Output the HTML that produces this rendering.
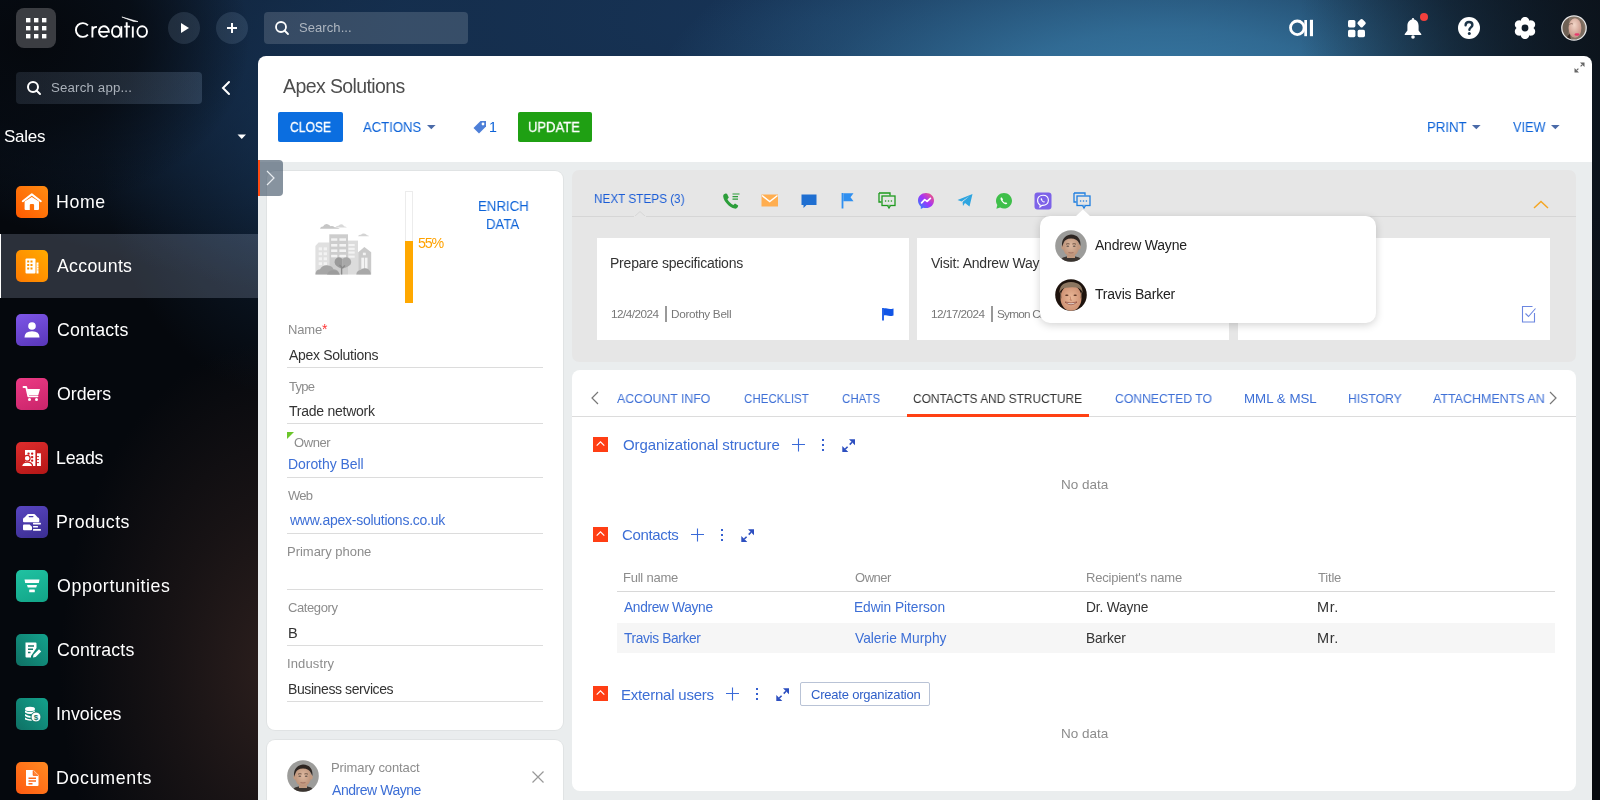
<!DOCTYPE html>
<html><head><meta charset="utf-8">
<style>
*{box-sizing:border-box;margin:0;padding:0}
html,body{width:1600px;height:800px;overflow:hidden}
body{font-family:"Liberation Sans",sans-serif;position:relative;background:#05080d}
.abs{position:absolute}
#bg{position:absolute;left:0;top:0;width:1600px;height:800px;
 background:
  radial-gradient(ellipse 520px 380px at 1330px 60px, rgba(52,110,150,0.95) 0%, rgba(40,90,130,0.6) 45%, rgba(20,50,80,0) 100%),
  radial-gradient(ellipse 700px 300px at 700px 0px, rgba(25,55,90,0.9) 0%, rgba(20,45,75,0) 100%),
  radial-gradient(ellipse 300px 400px at 250px 640px, rgba(60,35,35,0.7) 0%, rgba(40,25,25,0) 100%),
  linear-gradient(90deg,#04070c 0%, #0a1422 30%, #102640 60%, #0b1626 100%);}
.top{color:#fff}
.tb-grid{left:16px;top:8px;width:40px;height:40px;border-radius:8px;background:#3b3d42}
.tb-circ{width:32px;height:32px;border-radius:50%;background:rgba(170,195,230,0.14);top:12px}
.tb-search{left:264px;top:12px;width:204px;height:32px;border-radius:4px;background:rgba(255,255,255,0.15)}
.txt{white-space:nowrap;position:absolute;will-change:transform}
</style></head><body>
<div class="abs" style="left:0;top:0;width:1600px;height:800px;background:
 linear-gradient(90deg, rgba(12,19,27,0) 1300px, rgba(12,19,27,0.55) 1450px, rgba(12,19,27,0.95) 1600px),
 radial-gradient(ellipse 220px 170px at 30px 40px, rgba(5,8,13,1) 0%, rgba(5,8,13,0.75) 50%, rgba(5,8,13,0) 100%),
 radial-gradient(ellipse 520px 230px at 1170px 110px, rgba(58,126,170,1) 0%, rgba(58,126,170,0.75) 35%, rgba(58,126,170,0.3) 70%, rgba(58,126,170,0) 100%),
 radial-gradient(ellipse 1050px 320px at 820px 20px, rgba(23,52,87,1) 0%, rgba(23,52,87,0.85) 40%, rgba(23,52,87,0.4) 75%, rgba(23,52,87,0) 100%),
 radial-gradient(ellipse 200px 260px at 300px 140px, rgba(19,42,69,0.85) 0%, rgba(19,42,69,0.4) 50%, rgba(19,42,69,0) 100%),
 radial-gradient(ellipse 220px 330px at 280px 670px, rgba(58,39,35,0.75) 0%, rgba(58,39,35,0.35) 50%, rgba(58,39,35,0) 100%),
 #05080d"></div>
<div class="abs" style="left:1592px;top:300px;width:8px;height:500px;background:#080b10"></div>



<!-- top bar -->
<div class="abs tb-grid">
 <svg width="40" height="40" viewBox="0 0 40 40" fill="#fff">
  <rect x="10" y="10" width="4.4" height="4.4"/><rect x="18" y="10" width="4.4" height="4.4"/><rect x="26" y="10" width="4.4" height="4.4"/>
  <rect x="10" y="18" width="4.4" height="4.4"/><rect x="18" y="18" width="4.4" height="4.4"/><rect x="26" y="18" width="4.4" height="4.4"/>
  <rect x="10" y="26" width="4.4" height="4.4"/><rect x="18" y="26" width="4.4" height="4.4"/><rect x="26" y="26" width="4.4" height="4.4"/>
 </svg>
</div>
<svg class="abs" style="left:70px;top:10px" width="90" height="36" viewBox="0 0 90 36" fill="none" stroke="#fff" stroke-width="1.9">
 <path d="M17.93 15.38 A6.9 6.9 0 1 0 17.93 24.62"/>
 <path d="M22.4 16.3 V27.6 M22.4 21 Q22.6 16.9 27 16.9"/>
 <path d="M28.95 21.90 H38.85 A4.95 5.3 0 1 0 37.58 25.15"/>
 <ellipse cx="46.2" cy="21.6" rx="4.2" ry="5.3"/><path d="M51.3 16.2 V27.6"/>
 <path d="M56.7 12.2 V27.6 M54.2 16.6 H60"/>
 <path d="M62.8 16.4 V27.6"/>
 <ellipse cx="72.2" cy="21.6" rx="4.8" ry="5.3"/>
 <path d="M51.9 7 L68 11.6 L63.6 11.4Z" fill="#fff" stroke-width="0.6" stroke-linejoin="round"/>
</svg>
<div class="abs tb-circ" style="left:168px"></div>
<svg class="abs" style="left:176px;top:20px" width="16" height="16" viewBox="0 0 16 16"><path d="M5 3 L13 8 L5 13Z" fill="#fff"/></svg>
<div class="abs tb-circ" style="left:216px"></div>
<svg class="abs" style="left:224px;top:20px" width="16" height="16" viewBox="0 0 16 16"><path d="M8 3 V13 M3 8 H13" stroke="#fff" stroke-width="2"/></svg>
<div class="abs tb-search"></div>
<svg class="abs" style="left:274px;top:20px" width="16" height="16" viewBox="0 0 16 16"><circle cx="7" cy="7" r="5" fill="none" stroke="#fff" stroke-width="1.8"/><path d="M10.5 10.5 L14 14" stroke="#fff" stroke-width="1.8" stroke-linecap="round"/></svg>
<!-- right icons -->
<svg class="abs" style="left:1286px;top:16px" width="30" height="24" viewBox="0 0 30 24"><circle cx="11.3" cy="11.8" r="6.8" fill="none" stroke="#fff" stroke-width="2.8"/><path d="M19.65 4 V20.2" stroke="#fff" stroke-width="2.7"/><path d="M25.45 3.8 V20.2" stroke="#fff" stroke-width="3.1"/></svg>
<svg class="abs" style="left:1346px;top:18px" width="22" height="22" viewBox="0 0 22 22" fill="#fff">
 <rect x="2" y="2" width="7.4" height="7.4" rx="1.6"/><rect x="2" y="11.8" width="7.4" height="7.4" rx="1.6"/><rect x="11.6" y="11.8" width="7.4" height="7.4" rx="1.6"/>
 <rect x="12.2" y="1.8" width="6.8" height="6.8" rx="1.6" transform="rotate(45 15.6 5.2)"/>
</svg>
<svg class="abs" style="left:1402px;top:16px" width="24" height="24" viewBox="0 0 24 24" fill="#fff">
 <path d="M11 3.2 C7 3.6 5.4 6.5 5.4 10 V14.6 L2.6 18.2 Q2.4 19 3.2 19 H18.8 Q19.6 19 19.4 18.2 L16.6 14.6 V10 C16.6 6.5 15 3.6 11 3.2Z"/><circle cx="11" cy="3" r="1.1"/>
 <circle cx="11" cy="21" r="1.8"/>
</svg>
<div class="abs" style="left:1420px;top:13px;width:8px;height:8px;border-radius:50%;background:#f2403d"></div>
<svg class="abs" style="left:1457px;top:16px" width="24" height="24" viewBox="0 0 24 24">
 <circle cx="12" cy="12" r="11" fill="#fff"/>
 <path d="M8.6 9.3 C8.6 7.2 10.2 6 12 6 C14 6 15.4 7.3 15.4 9 C15.4 11.2 12.4 11.5 12.4 13.8" fill="none" stroke="#1c3448" stroke-width="2.4" stroke-linecap="round"/>
 <circle cx="12.3" cy="17.4" r="1.5" fill="#1c3448"/>
</svg>
<svg class="abs" style="left:1512px;top:16px" width="26" height="24" viewBox="0 0 26 24"><path fill="#fff" fill-rule="evenodd" d="M21.40 12.00 L21.65 12.15 L21.84 12.31 L22.00 12.47 L22.15 12.64 L22.28 12.81 L22.40 12.99 L22.52 13.17 L22.62 13.35 L22.71 13.54 L22.80 13.73 L22.88 13.92 L22.94 14.11 L23.00 14.31 L23.05 14.51 L23.09 14.70 L23.12 14.90 L23.14 15.10 L23.16 15.30 L23.16 15.50 L23.15 15.70 L23.14 15.89 L23.12 16.09 L23.08 16.28 L23.04 16.47 L22.99 16.66 L22.93 16.85 L22.87 17.03 L22.79 17.21 L22.71 17.38 L22.61 17.55 L22.51 17.72 L22.40 17.88 L22.29 18.03 L22.16 18.18 L22.03 18.32 L21.89 18.46 L21.75 18.59 L21.60 18.72 L21.44 18.84 L21.28 18.95 L21.11 19.05 L20.94 19.15 L20.76 19.23 L20.57 19.31 L20.39 19.39 L20.20 19.45 L20.00 19.51 L19.80 19.55 L19.60 19.59 L19.40 19.62 L19.19 19.64 L18.98 19.66 L18.77 19.66 L18.56 19.65 L18.34 19.63 L18.13 19.60 L17.91 19.56 L17.69 19.50 L17.46 19.42 L17.20 19.27 L17.20 19.57 L17.15 19.81 L17.09 20.03 L17.02 20.24 L16.94 20.44 L16.85 20.64 L16.75 20.83 L16.64 21.01 L16.52 21.18 L16.40 21.35 L16.28 21.51 L16.14 21.67 L16.00 21.82 L15.86 21.96 L15.70 22.09 L15.55 22.22 L15.39 22.33 L15.22 22.45 L15.05 22.55 L14.88 22.64 L14.70 22.73 L14.52 22.81 L14.34 22.87 L14.15 22.93 L13.96 22.98 L13.77 23.03 L13.58 23.06 L13.39 23.08 L13.19 23.10 L13.00 23.10 L12.81 23.10 L12.61 23.08 L12.42 23.06 L12.23 23.03 L12.04 22.98 L11.85 22.93 L11.66 22.87 L11.48 22.81 L11.30 22.73 L11.12 22.64 L10.95 22.55 L10.78 22.45 L10.61 22.33 L10.45 22.22 L10.30 22.09 L10.14 21.96 L10.00 21.82 L9.86 21.67 L9.72 21.51 L9.60 21.35 L9.48 21.18 L9.36 21.01 L9.25 20.83 L9.15 20.64 L9.06 20.44 L8.98 20.24 L8.91 20.03 L8.85 19.81 L8.80 19.57 L8.80 19.27 L8.54 19.42 L8.31 19.50 L8.09 19.56 L7.87 19.60 L7.66 19.63 L7.44 19.65 L7.23 19.66 L7.02 19.66 L6.81 19.64 L6.60 19.62 L6.40 19.59 L6.20 19.55 L6.00 19.51 L5.80 19.45 L5.61 19.39 L5.43 19.31 L5.24 19.23 L5.06 19.15 L4.89 19.05 L4.72 18.95 L4.56 18.84 L4.40 18.72 L4.25 18.59 L4.11 18.46 L3.97 18.32 L3.84 18.18 L3.71 18.03 L3.60 17.88 L3.49 17.72 L3.39 17.55 L3.29 17.38 L3.21 17.21 L3.13 17.03 L3.07 16.85 L3.01 16.66 L2.96 16.47 L2.92 16.28 L2.88 16.09 L2.86 15.89 L2.85 15.70 L2.84 15.50 L2.84 15.30 L2.86 15.10 L2.88 14.90 L2.91 14.70 L2.95 14.51 L3.00 14.31 L3.06 14.11 L3.12 13.92 L3.20 13.73 L3.29 13.54 L3.38 13.35 L3.48 13.17 L3.60 12.99 L3.72 12.81 L3.85 12.64 L4.00 12.47 L4.16 12.31 L4.35 12.15 L4.60 12.00 L4.35 11.85 L4.16 11.69 L4.00 11.53 L3.85 11.36 L3.72 11.19 L3.60 11.01 L3.48 10.83 L3.38 10.65 L3.29 10.46 L3.20 10.27 L3.12 10.08 L3.06 9.89 L3.00 9.69 L2.95 9.49 L2.91 9.30 L2.88 9.10 L2.86 8.90 L2.84 8.70 L2.84 8.50 L2.85 8.30 L2.86 8.11 L2.88 7.91 L2.92 7.72 L2.96 7.53 L3.01 7.34 L3.07 7.15 L3.13 6.97 L3.21 6.79 L3.29 6.62 L3.39 6.45 L3.49 6.28 L3.60 6.12 L3.71 5.97 L3.84 5.82 L3.97 5.68 L4.11 5.54 L4.25 5.41 L4.40 5.28 L4.56 5.16 L4.72 5.05 L4.89 4.95 L5.06 4.85 L5.24 4.77 L5.43 4.69 L5.61 4.61 L5.80 4.55 L6.00 4.49 L6.20 4.45 L6.40 4.41 L6.60 4.38 L6.81 4.36 L7.02 4.34 L7.23 4.34 L7.44 4.35 L7.66 4.37 L7.87 4.40 L8.09 4.44 L8.31 4.50 L8.54 4.58 L8.80 4.73 L8.80 4.43 L8.85 4.19 L8.91 3.97 L8.98 3.76 L9.06 3.56 L9.15 3.36 L9.25 3.17 L9.36 2.99 L9.48 2.82 L9.60 2.65 L9.72 2.49 L9.86 2.33 L10.00 2.18 L10.14 2.04 L10.30 1.91 L10.45 1.78 L10.61 1.67 L10.78 1.55 L10.95 1.45 L11.12 1.36 L11.30 1.27 L11.48 1.19 L11.66 1.13 L11.85 1.07 L12.04 1.02 L12.23 0.97 L12.42 0.94 L12.61 0.92 L12.81 0.90 L13.00 0.90 L13.19 0.90 L13.39 0.92 L13.58 0.94 L13.77 0.97 L13.96 1.02 L14.15 1.07 L14.34 1.13 L14.52 1.19 L14.70 1.27 L14.88 1.36 L15.05 1.45 L15.22 1.55 L15.39 1.67 L15.55 1.78 L15.70 1.91 L15.86 2.04 L16.00 2.18 L16.14 2.33 L16.28 2.49 L16.40 2.65 L16.52 2.82 L16.64 2.99 L16.75 3.17 L16.85 3.36 L16.94 3.56 L17.02 3.76 L17.09 3.97 L17.15 4.19 L17.20 4.43 L17.20 4.73 L17.46 4.58 L17.69 4.50 L17.91 4.44 L18.13 4.40 L18.34 4.37 L18.56 4.35 L18.77 4.34 L18.98 4.34 L19.19 4.36 L19.40 4.38 L19.60 4.41 L19.80 4.45 L20.00 4.49 L20.20 4.55 L20.39 4.61 L20.57 4.69 L20.76 4.77 L20.94 4.85 L21.11 4.95 L21.28 5.05 L21.44 5.16 L21.60 5.28 L21.75 5.41 L21.89 5.54 L22.03 5.68 L22.16 5.82 L22.29 5.97 L22.40 6.12 L22.51 6.28 L22.61 6.45 L22.71 6.62 L22.79 6.79 L22.87 6.97 L22.93 7.15 L22.99 7.34 L23.04 7.53 L23.08 7.72 L23.12 7.91 L23.14 8.11 L23.15 8.30 L23.16 8.50 L23.16 8.70 L23.14 8.90 L23.12 9.10 L23.09 9.30 L23.05 9.49 L23.00 9.69 L22.94 9.89 L22.88 10.08 L22.80 10.27 L22.71 10.46 L22.62 10.65 L22.52 10.83 L22.40 11.01 L22.28 11.19 L22.15 11.36 L22.00 11.53 L21.84 11.69 L21.65 11.85Z M16.4 12 A3.4 3.4 0 1 0 9.6 12 A3.4 3.4 0 1 0 16.4 12Z"/></svg>
<svg class="abs" style="left:1561px;top:15px" width="26" height="26" viewBox="0 0 26 26"><defs><clipPath id="uav"><circle cx="13" cy="13" r="12"/></clipPath><radialGradient id="uavf" cx="0.45" cy="0.35" r="0.6"><stop offset="0" stop-color="#f2d6c8"/><stop offset="1" stop-color="#c9988a"/></radialGradient></defs>
<g clip-path="url(#uav)"><rect width="26" height="26" fill="#857466"/>
<path d="M0 26 L0 8 Q3 2 8 3 L7 26Z" fill="#6e6054"/>
<path d="M19 4 Q24 8 24 26 L20 26Z" fill="#7a6a5e"/>
<path d="M5 26 Q6 20 9 19 L10 26Z" fill="#3a2a22"/>
<ellipse cx="14" cy="13" rx="6.4" ry="9.8" fill="url(#uavf)"/>
<path d="M8 10 Q10 7.5 12 9" fill="none" stroke="#8a6a5a" stroke-width="0.8"/>
<ellipse cx="16" cy="19.5" rx="2.6" ry="1.2" fill="#e8386e"/>
</g><circle cx="13" cy="13" r="12.2" fill="none" stroke="#e8e8e8" stroke-width="1.3"/></svg>
<!-- sidebar -->
<div class="abs" style="left:16px;top:72px;width:186px;height:32px;border-radius:4px;background:linear-gradient(90deg,rgba(160,185,220,0.13),rgba(170,200,235,0.18))"></div>
<svg class="abs" style="left:26px;top:80px" width="16" height="16" viewBox="0 0 16 16"><circle cx="7" cy="7" r="5" fill="none" stroke="#fff" stroke-width="2"/><path d="M10.5 10.5 L14 14" stroke="#fff" stroke-width="2" stroke-linecap="round"/></svg>
<svg class="abs" style="left:218px;top:80px" width="16" height="16" viewBox="0 0 16 16"><path d="M11 2 L5 8 L11 14" fill="none" stroke="#fff" stroke-width="2" stroke-linecap="round"/></svg>
<svg class="abs" style="left:237px;top:134px" width="10" height="6" viewBox="0 0 10 6"><path d="M0.5 0.5 H9 L4.75 5Z" fill="#fff"/></svg>
<div class="abs" style="left:0;top:234px;width:258px;height:64px;background:rgba(195,212,240,0.2);border-left:1px solid #fff"></div>
<div class="abs" style="left:16px;top:186px;width:32px;height:32px;border-radius:5px;background:linear-gradient(225deg,#ff8c12,#ff5a00)"></div>
<svg class="abs" style="left:16px;top:186px" width="32" height="32" viewBox="0 0 32 32"><path d="M6.8 15.2 L15.8 8.4 L24.8 15.2" fill="none" stroke="#fff" stroke-width="2" stroke-linejoin="round" stroke-linecap="round"/><path d="M8.6 15.6 L15.8 10.9 L23 15.6 V23 Q23 24 22 24 H18.1 V19 Q18.1 17.9 17 17.9 H14.9 Q13.8 17.9 13.8 19 V24 H9.6 Q8.6 24 8.6 23Z" fill="#fff"/></svg>
<div class="abs" style="left:16px;top:250px;width:32px;height:32px;border-radius:5px;background:linear-gradient(225deg,#ffab00,#ff7a00)"></div>
<svg class="abs" style="left:16px;top:250px" width="32" height="32" viewBox="0 0 32 32"><rect x="9.5" y="8.5" width="10" height="15" rx="1" fill="#fff"/><g fill="#ff9500"><rect x="11.2" y="10.5" width="2" height="2"/><rect x="14.5" y="10.5" width="2" height="2"/><rect x="11.2" y="14" width="2" height="2"/><rect x="14.5" y="14" width="2" height="2"/><rect x="11.2" y="17.5" width="2" height="2"/><rect x="14.5" y="17.5" width="2" height="2"/></g><path d="M20.5 12.5 H22.5 V23.5 H20.5" fill="#fff"/><g stroke="#ff9500" stroke-width="0.7"><path d="M21.5 15 H22.6 M21.5 17.5 H22.6 M21.5 20 H22.6"/></g></svg>
<div class="abs" style="left:16px;top:314px;width:32px;height:32px;border-radius:5px;background:linear-gradient(160deg,#7e56e8,#5836b8)"></div>
<svg class="abs" style="left:16px;top:314px" width="32" height="32" viewBox="0 0 32 32"><circle cx="16" cy="12" r="3.8" fill="#fff"/><path d="M8.5 23.5 Q8.5 17.3 16 17.3 Q23.5 17.3 23.5 23.5Z" fill="#fff"/></svg>
<div class="abs" style="left:16px;top:378px;width:32px;height:32px;border-radius:5px;background:linear-gradient(160deg,#ec3a84,#c9246a)"></div>
<svg class="abs" style="left:16px;top:378px" width="32" height="32" viewBox="0 0 32 32"><path d="M7.5 9 H10.2 L12.3 18.3 H21.5" fill="none" stroke="#fff" stroke-width="1.8" stroke-linejoin="round" stroke-linecap="round"/><path d="M11 11 H24 L22.3 17 H12.4Z" fill="#fff"/><circle cx="13.5" cy="21.5" r="1.5" fill="#fff"/><circle cx="20.5" cy="21.5" r="1.5" fill="#fff"/></svg>
<div class="abs" style="left:16px;top:442px;width:32px;height:32px;border-radius:5px;background:linear-gradient(160deg,#de2d2d,#b31616)"></div>
<svg class="abs" style="left:16px;top:442px" width="32" height="32" viewBox="0 0 32 32"><rect x="9" y="8" width="10.4" height="16" fill="#fff"/><g fill="#cf1d1d"><rect x="11.4" y="10.4" width="2.3" height="2.3" rx="1"/><rect x="15" y="10.4" width="2.3" height="2.3" rx="1"/><rect x="11.4" y="13.9" width="2.3" height="2.3" rx="1"/><rect x="15" y="13.9" width="2.3" height="2.3" rx="1"/><rect x="15" y="17.4" width="2.3" height="2.3" rx="1"/></g><rect x="21" y="11.3" width="3.9" height="12.7" fill="#fff"/><g stroke="#cf1d1d" stroke-width="0.9"><path d="M21 14.6 H23 M21 17.6 H23 M21 20.6 H23"/></g><circle cx="11.2" cy="16.2" r="2.9" fill="#fff" stroke="#cf1d1d" stroke-width="1.2"/><path d="M5.6 24.6 Q5.6 20.2 11.1 20.2 Q16.6 20.2 16.6 24.6Z" fill="#fff" stroke="#cf1d1d" stroke-width="1.2"/></svg>
<div class="abs" style="left:16px;top:506px;width:32px;height:32px;border-radius:5px;background:linear-gradient(160deg,#5845c0,#3b2e91)"></div>
<svg class="abs" style="left:16px;top:506px" width="32" height="32" viewBox="0 0 32 32"><path d="M8 16.2 Q7 16.2 7 15.2 V13.2 Q7 11.6 8.8 11.2 L10.8 8.9 Q11.4 8 12.5 8 H17.8 Q18.9 8 19.5 8.9 L21.5 11.2 Q23.3 11.6 23.3 13.2 V15.2 Q23.3 16.2 22.3 16.2Z" fill="#fff"/><rect x="12.6" y="9.9" width="4.9" height="1.3" rx="0.6" fill="#4a3cad"/><path d="M7 19.2 Q7 18.4 8 18.4 H13.6 L16 20.8 V23.2 Q16 24.2 15 24.2 H8 Q7 24.2 7 23.2Z" fill="#fff"/><rect x="17" y="16.7" width="7.9" height="1.8" rx="0.5" fill="#fff"/><rect x="17" y="19.9" width="5" height="1.7" rx="0.5" fill="#fff"/><rect x="17" y="23" width="7.9" height="1.7" rx="0.5" fill="#fff"/></svg>
<div class="abs" style="left:16px;top:570px;width:32px;height:32px;border-radius:5px;background:linear-gradient(160deg,#20c2a2,#12a487)"></div>
<svg class="abs" style="left:16px;top:570px" width="32" height="32" viewBox="0 0 32 32"><path d="M8.5 9.5 H23.5 L22.8 13 H9.2Z" fill="#fff"/><path d="M11 15 H21 L20.2 17.6 H11.8Z" fill="#fff"/><rect x="13.2" y="19.6" width="5.6" height="2.6" rx="0.5" fill="#fff"/></svg>
<div class="abs" style="left:16px;top:634px;width:32px;height:32px;border-radius:5px;background:linear-gradient(225deg,#13a28c,#0f7064)"></div>
<svg class="abs" style="left:16px;top:634px" width="32" height="32" viewBox="0 0 32 32"><path d="M9.5 8.5 H19.5 Q20.5 8.5 20.5 9.5 V14 L15 22 V23.5 H10.5 Q9.5 23.5 9.5 22.5Z" fill="#fff"/><g stroke="#17796c" stroke-width="1.5"><path d="M12 12 H18 M12 15.2 H17 M12 18.4 H14.5"/></g><path d="M17 23.5 L17.5 20.8 L23 15.3 L25.2 17.5 L19.7 23Z" fill="#fff"/></svg>
<div class="abs" style="left:16px;top:698px;width:32px;height:32px;border-radius:5px;background:linear-gradient(225deg,#13a28c,#0f7064)"></div>
<svg class="abs" style="left:16px;top:698px" width="32" height="32" viewBox="0 0 32 32"><ellipse cx="14" cy="11" rx="5" ry="2.2" fill="#fff"/><path d="M9 12.5 Q14 15.5 19 12.5 V14.5 Q14 17.5 9 14.5Z" fill="#fff"/><path d="M9 16 Q14 19 16 17.5 V19.5 Q12 20.5 9 18Z" fill="#fff"/><path d="M9 19.5 Q12 21.8 16 21 V22.5 Q12 23 9 21.5Z" fill="#fff"/><circle cx="20" cy="19" r="5" fill="#fff" stroke="#17796c" stroke-width="1"/><text x="20" y="22" font-family="Liberation Sans" font-size="8" font-weight="bold" text-anchor="middle" fill="#17796c">$</text></svg>
<div class="abs" style="left:16px;top:762px;width:32px;height:32px;border-radius:5px;background:linear-gradient(225deg,#ff8a22,#ff5a10)"></div>
<svg class="abs" style="left:16px;top:762px" width="32" height="32" viewBox="0 0 32 32"><path d="M10 8 H17.5 L22.5 13 V23 Q22.5 24 21.5 24 H11 Q10 24 10 23Z" fill="#fff"/><path d="M17 8 V13.5 H22.5" fill="#ff8a3d"/><path d="M17.2 8.5 V13.3 H22" fill="none" stroke="#ff6a1a" stroke-width="1"/><g stroke="#ff6a1a" stroke-width="1.4"><path d="M12.5 16.3 H20 M12.5 19 H20 M12.5 21.7 H16.5"/></g></svg>

<!-- main panel -->
<div class="abs" style="left:258px;top:56px;width:1334px;height:744px;background:#fff;border-top-left-radius:8px;border-top-right-radius:8px"></div>
<div class="abs" style="left:258px;top:162px;width:1334px;height:638px;background:#eaedee"></div>
<svg class="abs" style="left:1574px;top:62px" width="11" height="11" viewBox="0 0 11 11"><path d="M6 0.5 H10.5 V5Z M0.5 6 V10.5 H5Z" fill="#666"/><path d="M6.6 4.4 L8.2 2.8 M4.4 6.6 L2.8 8.2" stroke="#666" stroke-width="1.2"/></svg>
<div class="abs" style="left:278px;top:112px;width:65px;height:30px;border-radius:2px;background:#0b6ee0"></div>
<svg class="abs" style="left:427px;top:125px" width="9" height="5" viewBox="0 0 9 5"><path d="M0 0 H8.6 L4.3 4.3Z" fill="#4a6aa8"/></svg>
<svg class="abs" style="left:472px;top:119px" width="16" height="16" viewBox="0 0 16 16"><path d="M1.5 9 L8.5 2 H14 V7.5 L7 14.5Z" fill="#4d7fd8"/><circle cx="11" cy="5" r="1.4" fill="#fff"/></svg>
<div class="abs" style="left:518px;top:112px;width:74px;height:30px;border-radius:2px;background:#1fa013"></div>
<svg class="abs" style="left:1472px;top:125px" width="9" height="5" viewBox="0 0 9 5"><path d="M0 0 H8.6 L4.3 4.3Z" fill="#4a6aa8"/></svg>
<svg class="abs" style="left:1551px;top:125px" width="9" height="5" viewBox="0 0 9 5"><path d="M0 0 H8.6 L4.3 4.3Z" fill="#4a6aa8"/></svg>

<!-- left card -->
<div class="abs" style="left:267px;top:171px;width:296px;height:559px;background:#fff;border-radius:8px;box-shadow:0 0 0 1px rgba(0,0,0,0.04)"></div>
<!-- side toggle -->
<div class="abs" style="left:258px;top:160px;width:25px;height:36px;background:rgba(62,80,100,0.62);border-radius:0 4px 4px 0"></div>
<div class="abs" style="left:258px;top:160px;width:2px;height:36px;background:#ff4b12"></div>
<svg class="abs" style="left:264px;top:170px" width="12" height="16" viewBox="0 0 12 16"><path d="M3 1 L10 8 L3 15" fill="none" stroke="#e8ecf0" stroke-width="1.2"/></svg>

<svg class="abs" style="left:314px;top:222px" width="58" height="54" viewBox="0 0 58 54">
 <path d="M1.4 24 L4.5 20.4 H15.5 V52.6 H1.4Z" fill="#e0e0e0"/>
 <rect x="34" y="18.6" width="10" height="34" fill="#dcdcdc"/>
 <rect x="15.3" y="12.3" width="18.7" height="40.3" fill="#cdcdcd"/>
 <path d="M44.2 30.3 L50.4 25 L57.2 30.3 V52.6 H44.2Z" fill="#cacaca"/>
 <g fill="#f3f3f3">
  <rect x="17.1" y="16.3" width="6.2" height="2.5"/><rect x="25.4" y="16.3" width="6.6" height="2.5"/>
  <rect x="17.1" y="22" width="6.2" height="2.6"/><rect x="25.4" y="22" width="6.6" height="2.6"/>
  <rect x="17.1" y="27.4" width="6.2" height="2.6"/><rect x="25.4" y="27.4" width="6.6" height="2.6"/>
  <rect x="17.1" y="32.8" width="6.2" height="2.5"/><rect x="25.4" y="32.8" width="6.6" height="2.5"/>
  <rect x="34.5" y="22" width="6.2" height="2.1"/><rect x="34.5" y="25.8" width="6.2" height="2.1"/><rect x="34.5" y="29.5" width="6.2" height="2.1"/><rect x="34.5" y="33.6" width="6.2" height="2.1"/>
  <rect x="4.7" y="25.4" width="3.3" height="2.9"/><rect x="9.7" y="25.4" width="3.3" height="2.9"/>
  <rect x="4.7" y="30.3" width="3.3" height="2.9"/><rect x="9.7" y="30.3" width="3.3" height="2.9"/>
  <rect x="4.7" y="35.3" width="3.3" height="2.9"/><rect x="9.7" y="35.3" width="3.3" height="2.9"/>
  <rect x="4.7" y="40.2" width="3.3" height="2.9"/><rect x="9.7" y="40.2" width="3.3" height="2.9"/>
  <rect x="48.9" y="30.7" width="2.9" height="2.5"/>
  <rect x="47.3" y="35.7" width="2.9" height="11"/><rect x="51" y="35.7" width="2.5" height="11"/>
 </g>
 <path d="M6 6.8 Q6.5 4.5 9 4.6 Q10.5 1.4 13.5 2.2 Q15.5 2.5 16.5 4.2 Q19 3.5 20.5 5.3 Q23.5 5 25.8 6.8Z" fill="#c6c6c6"/>
 <path d="M21.2 5.6 Q22.5 3.5 24.5 3.8 Q26 1.4 28.5 2.5 Q30 4 30.5 4.6 Q32 4.6 32.8 5.6Z" fill="#d9d9d9"/>
 <path d="M44 14.2 Q45 12.5 47 12.8 Q48.5 10.8 51 11.8 Q52.5 12.5 53 13.2 Q54.5 13.3 55 14.2Z" fill="#d4d4d4"/>
 <path d="M28.5 37 Q26 34.5 23.5 35.5 Q20.4 37 20.6 40.5 Q21 44.5 28 46.8Z" fill="#9a9a9a"/>
 <path d="M28.5 37 Q31 34.5 34 35.5 Q37.4 37 37.2 40.5 Q37 44.5 28 46.8Z" fill="#a8a8a8"/>
 <path d="M27.6 52.6 V45 L25.5 43 M28.4 46 L31 43.5" stroke="#8a8a8a" stroke-width="1.4" fill="none"/>
 <path d="M1.4 52.6 Q1.5 47.5 6 47.2 Q8 43.2 13 43.2 Q18.5 43.6 19.5 47.3 Q22 47 24 49 L25.8 52.6Z" fill="#a6a6a6"/>
 <path d="M13 52.6 Q14.5 48.5 19 48.3 Q23.5 48 25.8 52.6Z" fill="#9c9c9c"/>
 <path d="M42.3 52.6 Q42.5 48.5 46.5 48 Q49 45.8 52.5 46.5 Q56.5 47.5 56.8 52.6Z" fill="#a8a8a8"/>
</svg>
<div class="abs" style="left:405px;top:191px;width:8px;height:112px;border:1px solid #ececec;background:#fff"></div>
<div class="abs" style="left:405px;top:241px;width:8px;height:62px;background:#ffa800"></div>
<div class="abs" style="left:287px;top:367px;width:256px;height:1px;background:#dcdcdc"></div>
<div class="abs" style="left:287px;top:423px;width:256px;height:1px;background:#dcdcdc"></div>
<svg class="abs" style="left:287px;top:432px" width="8" height="8" viewBox="0 0 8 8"><path d="M0 0 H7 L0 7Z" fill="#6bc62b"/></svg>
<div class="abs" style="left:287px;top:477px;width:256px;height:1px;background:#dcdcdc"></div>
<div class="abs" style="left:287px;top:533px;width:256px;height:1px;background:#dcdcdc"></div>
<div class="abs" style="left:287px;top:589px;width:256px;height:1px;background:#dcdcdc"></div>
<div class="abs" style="left:287px;top:645px;width:256px;height:1px;background:#dcdcdc"></div>
<div class="abs" style="left:287px;top:701px;width:256px;height:1px;background:#dcdcdc"></div>

<!-- primary contact card -->
<div class="abs" style="left:267px;top:740px;width:296px;height:70px;background:#fff;border-radius:8px;box-shadow:0 0 0 1px rgba(0,0,0,0.04)"></div>
<svg class="abs" style="left:287px;top:760px" width="32" height="32" viewBox="0 0 32 32"><defs><clipPath id="ava3"><circle cx="16" cy="16" r="15.8"/></clipPath><radialGradient id="ava3f" cx="0.5" cy="0.45" r="0.6"><stop offset="0" stop-color="#dcb8a0"/><stop offset="1" stop-color="#b88e74"/></radialGradient></defs>
<g clip-path="url(#ava3)"><rect width="32" height="32" fill="#9c9c9a"/>
<path d="M4 32 Q6 26 16 26 Q26 26 28 32Z" fill="#3a3430"/>
<rect x="12" y="22" width="8" height="6" fill="#c09a80"/>
<ellipse cx="16" cy="16.5" rx="8.2" ry="10" fill="url(#ava3f)"/>
<ellipse cx="7.8" cy="17" rx="1.5" ry="2.5" fill="#c39a80"/><ellipse cx="24.2" cy="17" rx="1.5" ry="2.5" fill="#c39a80"/>
<path d="M7 17 Q6 6 16 4.5 Q26 5 25.5 16 L24 13 Q22 8.5 16 8.5 Q10 8.5 8.5 13Z" fill="#2e2622"/>
<g fill="#6a5a50"><ellipse cx="12.8" cy="16.2" rx="1.4" ry="0.8"/><ellipse cx="19.2" cy="16.2" rx="1.4" ry="0.8"/></g>
<path d="M11 14.2 Q13 13.2 14.6 14 M17.4 14 Q19 13.2 21 14.2" stroke="#5a4436" stroke-width="0.8" fill="none"/>
<path d="M13.5 22.6 Q16 23.4 18.5 22.6" stroke="#9a6a5a" stroke-width="0.9" fill="none"/>
</g></svg>
<svg class="abs" style="left:531px;top:770px" width="14" height="14" viewBox="0 0 14 14"><path d="M1.5 1.5 L12.5 12.5 M12.5 1.5 L1.5 12.5" stroke="#999" stroke-width="1.2"/></svg>

<!-- next steps -->
<div class="abs" style="left:572px;top:170px;width:1004px;height:192px;background:#e6e6e6;border-radius:7px"></div>
<div class="abs" style="left:572px;top:216px;width:1004px;height:1px;background:#d6d6d6"></div>
<svg class="abs" style="left:634px;top:211px" width="12" height="6" viewBox="0 0 12 6"><path d="M0 6 L6 0.5 L12 6Z" fill="#e6e6e6" stroke="#d6d6d6" stroke-width="1"/><rect x="0" y="5" width="12" height="1" fill="#e6e6e6"/></svg>
<svg class="abs" style="left:1532px;top:198px" width="18" height="12" viewBox="0 0 18 12"><path d="M2 10 L9 3.5 L16 10" fill="none" stroke="#f5a623" stroke-width="1.5"/></svg>
<svg class="abs" style="left:721px;top:191px" width="20" height="20" viewBox="0 0 20 20">
 <path d="M4.5 2.5 C3 2.8 2 4 2.2 5.6 C2.8 10.8 8.6 16.6 13.6 17.6 C15.2 17.9 16.6 16.8 17 15.6 L17.2 14.6 L14 12.6 L12.4 14 C10 12.8 7.6 10.4 6.4 8.2 L7.8 6.4 L6 2.8Z" fill="#2c9e3a"/>
 <path d="M11.5 3 H18.5 M11.5 5.6 H17 M11.5 8.2 H17" stroke="#2c9e3a" stroke-width="1.2"/>
</svg>
<svg class="abs" style="left:761px;top:193px" width="18" height="15" viewBox="0 0 18 15"><rect x="0.5" y="1.5" width="16.5" height="12" fill="#ffae50"/><path d="M1 2.5 L8.75 8.5 L16.5 2.5" fill="none" stroke="#fff" stroke-width="1.4"/></svg>
<svg class="abs" style="left:801px;top:193px" width="16" height="16" viewBox="0 0 16 16"><path d="M0.5 1.5 H15.5 V12 H5.5 L2.5 15 V12 H0.5Z" fill="#1f6fd1"/></svg>
<svg class="abs" style="left:841px;top:192px" width="14" height="17" viewBox="0 0 14 17"><path d="M1.5 1 V16.5" stroke="#2f8ff0" stroke-width="1.8"/><path d="M2.4 1.2 H12.5 L9.5 5.2 L12.5 9.2 H2.4Z" fill="#2f8ff0"/></svg>
<svg class="abs" style="left:878px;top:192px" width="18" height="18" viewBox="0 0 18 18" fill="none" stroke="#1e9a1e" stroke-width="1.3">
 <path d="M1 1 H12 V3.5"/><path d="M1 1 V10 H3.5"/>
 <rect x="4" y="4" width="13" height="9.5" fill="#e6e6e6"/><path d="M9.5 13.5 L11 16 L12.5 13.5" fill="#e6e6e6"/>
 <g fill="#1e9a1e" stroke="none"><circle cx="7.6" cy="9" r="0.8"/><circle cx="10.5" cy="9" r="0.8"/><circle cx="13.4" cy="9" r="0.8"/></g>
</svg>
<svg class="abs" style="left:917px;top:192px" width="18" height="18" viewBox="0 0 18 18">
 <defs><linearGradient id="mg" x1="0" y1="1" x2="1" y2="0"><stop offset="0" stop-color="#1a8cff"/><stop offset="0.5" stop-color="#a233fa"/><stop offset="1" stop-color="#ff5c6b"/></linearGradient></defs>
 <path d="M9 1 C4.4 1 1 4.3 1 8.6 C1 11 2.1 13.1 3.8 14.4 V17 L6.3 15.7 C7.1 15.9 8 16.1 9 16.1 C13.6 16.1 17 12.8 17 8.5 C17 4.3 13.6 1 9 1Z" fill="url(#mg)"/>
 <path d="M4.6 10.8 L7.7 7.6 L10.1 9.4 L13.4 6.3" fill="none" stroke="#fff" stroke-width="1.7" stroke-linejoin="round" stroke-linecap="round"/>
</svg>
<svg class="abs" style="left:957px;top:193px" width="16" height="15" viewBox="0 0 16 15"><path d="M0.5 7 L15.5 1 L12.5 13.5 L8 10 L6 13 L5.6 9 L12.5 3 L4.6 8.4Z" fill="#2ea5e0"/></svg>
<svg class="abs" style="left:995px;top:192px" width="18" height="18" viewBox="0 0 18 18"><path d="M9 1 C4.6 1 1 4.5 1 8.8 C1 10.4 1.5 11.8 2.3 13 L1.4 16.8 L5.2 15.6 C6.3 16.2 7.6 16.6 9 16.6 C13.4 16.6 17 13.1 17 8.8 C17 4.5 13.4 1 9 1Z" fill="#3fbf4a"/><path d="M6 5.5 C5.4 6 5.4 7 6 8.2 C7 10 8.4 11.4 10 12 C11 12.4 11.8 12.2 12.3 11.6 L11 10.3 L10 10.8 C9 10.3 8 9.3 7.5 8.3 L8 7.4 L6.9 5.6Z" fill="#fff"/></svg>
<svg class="abs" style="left:1034px;top:192px" width="18" height="18" viewBox="0 0 18 18"><rect x="0.5" y="0.5" width="17" height="17" rx="3" fill="#7d62e8"/><path d="M9 3.2 C5.6 3.2 3.6 5.2 3.6 8.3 C3.6 10.4 4.5 12 6 12.8 V15 L8 13.3 C11.9 13.6 14.4 11.6 14.4 8.3 C14.4 5.2 12.4 3.2 9 3.2Z" fill="none" stroke="#fff" stroke-width="1.1"/><path d="M7 6.2 C6.6 6.5 6.6 7.2 7 8 C7.6 9.2 8.5 10 9.6 10.4 C10.2 10.6 10.7 10.4 11 10 L10.2 9.2 L9.6 9.5 C9 9.2 8.4 8.6 8.1 8 L8.4 7.4 L7.7 6.2Z" fill="#fff"/></svg>
<svg class="abs" style="left:1073px;top:192px" width="18" height="18" viewBox="0 0 18 18" fill="none" stroke="#1f7fe0" stroke-width="1.3">
 <path d="M1 1 H12 V3.5"/><path d="M1 1 V10 H3.5"/>
 <rect x="4" y="4" width="13" height="9.5" fill="#e6e6e6"/><path d="M9.5 13.5 L11 16 L12.5 13.5" fill="#e6e6e6"/>
 <g fill="#1f7fe0" stroke="none"><circle cx="7.6" cy="9" r="0.8"/><circle cx="10.5" cy="9" r="0.8"/><circle cx="13.4" cy="9" r="0.8"/></g>
</svg>

<div class="abs" style="left:597px;top:238px;width:312px;height:102px;background:#fff"></div>
<div class="abs" style="left:917px;top:238px;width:312px;height:102px;background:#fff"></div>
<div class="abs" style="left:1238px;top:238px;width:312px;height:102px;background:#fff"></div>
<div class="abs" style="left:665px;top:306px;width:1.5px;height:16px;background:#999"></div>
<svg class="abs" style="left:881px;top:307px" width="14" height="14" viewBox="0 0 14 14"><path d="M2 1 V13.5" stroke="#1155e6" stroke-width="1.8"/><path d="M2.8 1.5 C5 0.5 7 3 12.5 1.5 V8.5 C7 10 5 7.5 2.8 8.5Z" fill="#1155e6"/></svg>
<div class="abs" style="left:991px;top:306px;width:1.5px;height:16px;background:#999"></div>
<svg class="abs" style="left:1521px;top:305px" width="16" height="18" viewBox="0 0 16 18" fill="none" stroke="#6b86e0" stroke-width="1.1"><path d="M13.5 8 V17 H1.5 V1.5 H11.5"/><path d="M4.5 8.5 L7.5 11.5 L14.5 3.5"/></svg>

<!-- tabs box -->
<div class="abs" style="left:572px;top:370px;width:1004px;height:421px;background:#fff;border-radius:8px"></div>
<div class="abs" style="left:572px;top:416px;width:1004px;height:1px;background:#dcdcdc"></div>
<svg class="abs" style="left:589px;top:391px" width="12" height="14" viewBox="0 0 12 14"><path d="M9 1 L3 7 L9 13" fill="none" stroke="#777" stroke-width="1.2"/></svg>
<svg class="abs" style="left:1547px;top:391px" width="12" height="14" viewBox="0 0 12 14"><path d="M3 1 L9 7 L3 13" fill="none" stroke="#777" stroke-width="1.2"/></svg>
<div class="abs" style="left:907px;top:414px;width:182px;height:3px;background:#ff4013"></div>
<div class="abs" style="left:593px;top:437px;width:15px;height:15px;background:#ff3e14"></div>
<svg class="abs" style="left:593px;top:437px" width="15" height="15" viewBox="0 0 15 15"><path d="M3.7 8.6 L7.5 4.8 L11.3 8.6" fill="none" stroke="#fff" stroke-width="1.15"/></svg>
<svg class="abs" style="left:792px;top:438px" width="14" height="14" viewBox="0 0 14 14"><path d="M6.5 0.5 V13.5 M0 6.5 H13" stroke="#3a6ad8" stroke-width="1.1"/></svg>
<svg class="abs" style="left:822px;top:439px" width="3" height="13" viewBox="0 0 3 13" fill="#3560d0"><rect x="0" y="0" width="2" height="2"/><rect x="0" y="5" width="2" height="2"/><rect x="0" y="10" width="2" height="2"/></svg>
<svg class="abs" style="left:842px;top:439px" width="14" height="14" viewBox="0 0 14 14"><path d="M7 0.3 H13 V6.3Z M0.3 7 V13 H6.3Z" fill="#2d4fc0"/><path d="M7.7 5.6 L10 3.3 M5.6 7.7 L3.3 10" stroke="#2d4fc0" stroke-width="1.6"/></svg>
<div class="abs" style="left:593px;top:527px;width:15px;height:15px;background:#ff3e14"></div>
<svg class="abs" style="left:593px;top:527px" width="15" height="15" viewBox="0 0 15 15"><path d="M3.7 8.6 L7.5 4.8 L11.3 8.6" fill="none" stroke="#fff" stroke-width="1.15"/></svg>
<svg class="abs" style="left:691px;top:528px" width="14" height="14" viewBox="0 0 14 14"><path d="M6.5 0.5 V13.5 M0 6.5 H13" stroke="#3a6ad8" stroke-width="1.1"/></svg>
<svg class="abs" style="left:721px;top:529px" width="3" height="13" viewBox="0 0 3 13" fill="#3560d0"><rect x="0" y="0" width="2" height="2"/><rect x="0" y="5" width="2" height="2"/><rect x="0" y="10" width="2" height="2"/></svg>
<svg class="abs" style="left:741px;top:529px" width="14" height="14" viewBox="0 0 14 14"><path d="M7 0.3 H13 V6.3Z M0.3 7 V13 H6.3Z" fill="#2d4fc0"/><path d="M7.7 5.6 L10 3.3 M5.6 7.7 L3.3 10" stroke="#2d4fc0" stroke-width="1.6"/></svg>
<div class="abs" style="left:617px;top:591px;width:938px;height:1px;background:#d8d8d8"></div>
<div class="abs" style="left:617px;top:623px;width:938px;height:30px;background:#f6f6f6"></div>
<div class="abs" style="left:593px;top:686px;width:15px;height:15px;background:#ff3e14"></div>
<svg class="abs" style="left:593px;top:686px" width="15" height="15" viewBox="0 0 15 15"><path d="M3.7 8.6 L7.5 4.8 L11.3 8.6" fill="none" stroke="#fff" stroke-width="1.15"/></svg>
<svg class="abs" style="left:726px;top:687px" width="14" height="14" viewBox="0 0 14 14"><path d="M6.5 0.5 V13.5 M0 6.5 H13" stroke="#3a6ad8" stroke-width="1.1"/></svg>
<svg class="abs" style="left:756px;top:688px" width="3" height="13" viewBox="0 0 3 13" fill="#3560d0"><rect x="0" y="0" width="2" height="2"/><rect x="0" y="5" width="2" height="2"/><rect x="0" y="10" width="2" height="2"/></svg>
<svg class="abs" style="left:776px;top:688px" width="14" height="14" viewBox="0 0 14 14"><path d="M7 0.3 H13 V6.3Z M0.3 7 V13 H6.3Z" fill="#2d4fc0"/><path d="M7.7 5.6 L10 3.3 M5.6 7.7 L3.3 10" stroke="#2d4fc0" stroke-width="1.6"/></svg>
<div class="abs" style="left:800px;top:682px;width:130px;height:24px;border:1px solid #b9c3d6;border-radius:2px;background:#fff"></div>

<div class="txt" style="left:298.50px;top:18px;font-size:13.0px;line-height:19px;letter-spacing:0.073px;color:#aeb6c0;font-weight:normal;">Search...</div>
<div class="txt" style="left:50.50px;top:78px;font-size:13.25px;line-height:19px;letter-spacing:0.172px;color:#aab1ba;font-weight:normal;">Search app...</div>
<div class="txt" style="left:4.00px;top:125px;font-size:17.0px;line-height:24px;letter-spacing:-0.256px;color:#fff;font-weight:normal;">Sales</div>
<div class="txt" style="left:55.60px;top:190px;font-size:17.75px;line-height:25px;letter-spacing:0.608px;color:#fff;font-weight:normal;">Home</div>
<div class="txt" style="left:56.60px;top:254px;font-size:17.75px;line-height:25px;letter-spacing:0.281px;color:#fff;font-weight:normal;">Accounts</div>
<div class="txt" style="left:56.60px;top:318px;font-size:17.75px;line-height:25px;letter-spacing:0.175px;color:#fff;font-weight:normal;">Contacts</div>
<div class="txt" style="left:56.60px;top:382px;font-size:17.75px;line-height:25px;letter-spacing:-0.034px;color:#fff;font-weight:normal;">Orders</div>
<div class="txt" style="left:55.60px;top:446px;font-size:17.75px;line-height:25px;letter-spacing:-0.222px;color:#fff;font-weight:normal;">Leads</div>
<div class="txt" style="left:55.60px;top:510px;font-size:17.75px;line-height:25px;letter-spacing:0.490px;color:#fff;font-weight:normal;">Products</div>
<div class="txt" style="left:56.60px;top:574px;font-size:17.75px;line-height:25px;letter-spacing:0.609px;color:#fff;font-weight:normal;">Opportunities</div>
<div class="txt" style="left:56.60px;top:638px;font-size:17.75px;line-height:25px;letter-spacing:0.165px;color:#fff;font-weight:normal;">Contracts</div>
<div class="txt" style="left:55.60px;top:702px;font-size:17.75px;line-height:25px;letter-spacing:0.051px;color:#fff;font-weight:normal;">Invoices</div>
<div class="txt" style="left:55.60px;top:766px;font-size:17.75px;line-height:25px;letter-spacing:0.713px;color:#fff;font-weight:normal;">Documents</div>
<div class="txt" style="left:283.00px;top:72px;font-size:19.5px;line-height:28px;letter-spacing:-0.595px;color:#4d4d4d;font-weight:normal;">Apex Solutions</div>
<div class="txt" style="left:290.00px;top:116px;font-size:15px;line-height:22px;transform:scaleX(0.8083);transform-origin:0 0;color:#fff;font-weight:normal;-webkit-text-stroke:0.35px #fff">CLOSE</div>
<div class="txt" style="left:363.25px;top:117px;font-size:14.25px;line-height:20px;transform:scaleX(0.9191);transform-origin:0 0;color:#0d63d8;font-weight:normal;">ACTIONS</div>
<div class="txt" style="left:488.90px;top:117px;font-size:14.25px;line-height:20px;letter-spacing:0.000px;color:#0d63d8;font-weight:normal;">1</div>
<div class="txt" style="left:528.33px;top:116px;font-size:15px;line-height:22px;transform:scaleX(0.8685);transform-origin:0 0;color:#fff;font-weight:normal;-webkit-text-stroke:0.35px #fff">UPDATE</div>
<div class="txt" style="left:1427.07px;top:117px;font-size:14.25px;line-height:20px;transform:scaleX(0.9276);transform-origin:0 0;color:#0d63d8;font-weight:normal;">PRINT</div>
<div class="txt" style="left:1513.00px;top:117px;font-size:14.25px;line-height:20px;transform:scaleX(0.8927);transform-origin:0 0;color:#0d63d8;font-weight:normal;">VIEW</div>
<div class="txt" style="left:478.05px;top:196px;font-size:14px;line-height:20px;transform:scaleX(0.9465);transform-origin:0 0;color:#0d63d8;font-weight:normal;">ENRICH</div>
<div class="txt" style="left:486.26px;top:214px;font-size:14px;line-height:20px;transform:scaleX(0.9392);transform-origin:0 0;color:#0d63d8;font-weight:normal;">DATA</div>
<div class="txt" style="left:418.40px;top:233px;font-size:14.25px;line-height:20px;letter-spacing:-1.125px;color:#ffa200;font-weight:normal;">55%</div>
<div class="txt" style="left:287.50px;top:320px;font-size:13px;line-height:19px;letter-spacing:-0.182px;color:#8c8c8c;font-weight:normal;">Name</div>
<div class="txt" style="left:322.30px;top:319px;font-size:14px;line-height:20px;letter-spacing:0.000px;color:#f33;font-weight:normal;">*</div>
<div class="txt" style="left:289.00px;top:345px;font-size:14px;line-height:20px;letter-spacing:-0.307px;color:#333;font-weight:normal;">Apex Solutions</div>
<div class="txt" style="left:288.50px;top:377px;font-size:13px;line-height:19px;letter-spacing:-0.751px;color:#8c8c8c;font-weight:normal;">Type</div>
<div class="txt" style="left:289.00px;top:401px;font-size:14px;line-height:20px;letter-spacing:-0.247px;color:#333;font-weight:normal;">Trade network</div>
<div class="txt" style="left:294.40px;top:433px;font-size:13px;line-height:19px;letter-spacing:-0.415px;color:#8c8c8c;font-weight:normal;">Owner</div>
<div class="txt" style="left:288.00px;top:454px;font-size:14px;line-height:20px;letter-spacing:-0.059px;color:#3d6fd6;font-weight:normal;">Dorothy Bell</div>
<div class="txt" style="left:288.30px;top:486px;font-size:13px;line-height:19px;letter-spacing:-0.783px;color:#8c8c8c;font-weight:normal;">Web</div>
<div class="txt" style="left:290.00px;top:510px;font-size:14px;line-height:20px;letter-spacing:-0.255px;color:#3d6fd6;font-weight:normal;">www.apex-solutions.co.uk</div>
<div class="txt" style="left:287.00px;top:542px;font-size:13px;line-height:19px;letter-spacing:-0.017px;color:#8c8c8c;font-weight:normal;">Primary phone</div>
<div class="txt" style="left:288.00px;top:598px;font-size:13px;line-height:19px;letter-spacing:-0.407px;color:#8c8c8c;font-weight:normal;">Category</div>
<div class="txt" style="left:288.00px;top:623px;font-size:14.5px;line-height:21px;letter-spacing:0.000px;color:#333;font-weight:normal;">B</div>
<div class="txt" style="left:287.00px;top:654px;font-size:13px;line-height:19px;letter-spacing:0.122px;color:#8c8c8c;font-weight:normal;">Industry</div>
<div class="txt" style="left:288.00px;top:679px;font-size:14px;line-height:20px;letter-spacing:-0.403px;color:#333;font-weight:normal;">Business services</div>
<div class="txt" style="left:331.00px;top:758px;font-size:13px;line-height:19px;letter-spacing:-0.114px;color:#8c8c8c;font-weight:normal;">Primary contact</div>
<div class="txt" style="left:332.00px;top:780px;font-size:14px;line-height:20px;letter-spacing:-0.457px;color:#3d6fd6;font-weight:normal;">Andrew Wayne</div>
<div class="txt" style="left:594.41px;top:189px;font-size:13.25px;line-height:19px;transform:scaleX(0.8868);transform-origin:0 0;color:#1a5cd6;font-weight:normal;">NEXT STEPS (3)</div>
<div class="txt" style="left:610.20px;top:253px;font-size:14.0px;line-height:20px;letter-spacing:-0.216px;color:#333;font-weight:normal;">Prepare specifications</div>
<div class="txt" style="left:611.20px;top:305px;font-size:11.75px;line-height:17px;letter-spacing:-0.530px;color:#777;font-weight:normal;">12/4/2024</div>
<div class="txt" style="left:671.40px;top:305px;font-size:11.75px;line-height:17px;letter-spacing:-0.317px;color:#777;font-weight:normal;">Dorothy Bell</div>
<div class="txt" style="left:931.40px;top:253px;font-size:14.0px;line-height:20px;letter-spacing:-0.222px;color:#333;font-weight:normal;">Visit: Andrew Wayne</div>
<div class="txt" style="left:931.40px;top:305px;font-size:11.75px;line-height:17px;letter-spacing:-0.519px;color:#777;font-weight:normal;">12/17/2024</div>
<div class="txt" style="left:997.40px;top:305px;font-size:11.75px;line-height:17px;letter-spacing:-0.778px;color:#777;font-weight:normal;">Symon Clark</div>
<div class="txt" style="left:617.00px;top:389px;font-size:13px;line-height:19px;transform:scaleX(0.9451);transform-origin:0 0;color:#3d6fd6;font-weight:normal;">ACCOUNT INFO</div>
<div class="txt" style="left:743.60px;top:389px;font-size:13px;line-height:19px;transform:scaleX(0.8874);transform-origin:0 0;color:#3d6fd6;font-weight:normal;">CHECKLIST</div>
<div class="txt" style="left:841.60px;top:389px;font-size:13px;line-height:19px;transform:scaleX(0.8843);transform-origin:0 0;color:#3d6fd6;font-weight:normal;">CHATS</div>
<div class="txt" style="left:913.00px;top:389px;font-size:13px;line-height:19px;transform:scaleX(0.9155);transform-origin:0 0;color:#333;font-weight:normal;">CONTACTS AND STRUCTURE</div>
<div class="txt" style="left:1115.00px;top:389px;font-size:13px;line-height:19px;transform:scaleX(0.9358);transform-origin:0 0;color:#3d6fd6;font-weight:normal;">CONNECTED TO</div>
<div class="txt" style="left:1243.98px;top:389px;font-size:13px;line-height:19px;transform:scaleX(1.0244);transform-origin:0 0;color:#3d6fd6;font-weight:normal;">MML &amp; MSL</div>
<div class="txt" style="left:1348.06px;top:389px;font-size:13px;line-height:19px;transform:scaleX(0.9357);transform-origin:0 0;color:#3d6fd6;font-weight:normal;">HISTORY</div>
<div class="txt" style="left:1433.00px;top:389px;font-size:13px;line-height:19px;transform:scaleX(0.9585);transform-origin:0 0;color:#3d6fd6;font-weight:normal;">ATTACHMENTS AN</div>
<div class="txt" style="left:622.60px;top:434px;font-size:15px;line-height:22px;letter-spacing:-0.109px;color:#3d6fd6;font-weight:normal;">Organizational structure</div>
<div class="txt" style="left:1061.40px;top:475px;font-size:13.5px;line-height:19px;letter-spacing:0.004px;color:#8c8c8c;font-weight:normal;">No data</div>
<div class="txt" style="left:622.00px;top:524px;font-size:15px;line-height:22px;letter-spacing:-0.356px;color:#3d6fd6;font-weight:normal;">Contacts</div>
<div class="txt" style="left:622.60px;top:568px;font-size:13px;line-height:19px;letter-spacing:-0.231px;color:#8c8c8c;font-weight:normal;">Full name</div>
<div class="txt" style="left:854.90px;top:568px;font-size:13px;line-height:19px;letter-spacing:-0.465px;color:#8c8c8c;font-weight:normal;">Owner</div>
<div class="txt" style="left:1085.50px;top:568px;font-size:13px;line-height:19px;letter-spacing:-0.212px;color:#8c8c8c;font-weight:normal;">Recipient's name</div>
<div class="txt" style="left:1317.90px;top:568px;font-size:13px;line-height:19px;letter-spacing:-0.187px;color:#8c8c8c;font-weight:normal;">Title</div>
<div class="txt" style="left:623.60px;top:598px;font-size:13.75px;line-height:20px;letter-spacing:-0.334px;color:#3d6fd6;font-weight:normal;">Andrew Wayne</div>
<div class="txt" style="left:853.90px;top:598px;font-size:13.75px;line-height:20px;letter-spacing:-0.051px;color:#3d6fd6;font-weight:normal;">Edwin Piterson</div>
<div class="txt" style="left:1085.50px;top:598px;font-size:13.75px;line-height:20px;letter-spacing:-0.166px;color:#333;font-weight:normal;">Dr. Wayne</div>
<div class="txt" style="left:1317.10px;top:597px;font-size:14.5px;line-height:21px;letter-spacing:0.596px;color:#333;font-weight:normal;">Mr.</div>
<div class="txt" style="left:623.60px;top:629px;font-size:13.75px;line-height:20px;letter-spacing:-0.372px;color:#3d6fd6;font-weight:normal;">Travis Barker</div>
<div class="txt" style="left:854.90px;top:629px;font-size:13.75px;line-height:20px;letter-spacing:0.002px;color:#3d6fd6;font-weight:normal;">Valerie Murphy</div>
<div class="txt" style="left:1085.50px;top:629px;font-size:13.75px;line-height:20px;letter-spacing:-0.124px;color:#333;font-weight:normal;">Barker</div>
<div class="txt" style="left:1317.10px;top:628px;font-size:14.5px;line-height:21px;letter-spacing:0.596px;color:#333;font-weight:normal;">Mr.</div>
<div class="txt" style="left:621.00px;top:684px;font-size:15px;line-height:22px;letter-spacing:-0.213px;color:#3d6fd6;font-weight:normal;">External users</div>
<div class="txt" style="left:810.50px;top:685px;font-size:13.0px;line-height:19px;letter-spacing:-0.207px;color:#2f5fc8;font-weight:normal;">Create organization</div>
<div class="txt" style="left:1061.40px;top:724px;font-size:13.5px;line-height:19px;letter-spacing:0.004px;color:#8c8c8c;font-weight:normal;">No data</div>
<div class="abs" style="left:1040px;top:216px;width:336px;height:107px;background:#fff;border-radius:10px;box-shadow:0 2px 8px rgba(0,0,0,0.18)"></div>
<svg class="abs" style="left:1075px;top:209px" width="16" height="8" viewBox="0 0 16 8"><path d="M0 8 L8 0.5 L16 8Z" fill="#fff"/></svg>
<svg class="abs" style="left:1055px;top:230px" width="32" height="32" viewBox="0 0 32 32"><defs><clipPath id="ava1"><circle cx="16" cy="16" r="15.8"/></clipPath><radialGradient id="ava1f" cx="0.5" cy="0.45" r="0.6"><stop offset="0" stop-color="#dcb8a0"/><stop offset="1" stop-color="#b88e74"/></radialGradient></defs>
<g clip-path="url(#ava1)"><rect width="32" height="32" fill="#9c9c9a"/>
<path d="M4 32 Q6 26 16 26 Q26 26 28 32Z" fill="#3a3430"/>
<rect x="12" y="22" width="8" height="6" fill="#c09a80"/>
<ellipse cx="16" cy="16.5" rx="8.2" ry="10" fill="url(#ava1f)"/>
<ellipse cx="7.8" cy="17" rx="1.5" ry="2.5" fill="#c39a80"/><ellipse cx="24.2" cy="17" rx="1.5" ry="2.5" fill="#c39a80"/>
<path d="M7 17 Q6 6 16 4.5 Q26 5 25.5 16 L24 13 Q22 8.5 16 8.5 Q10 8.5 8.5 13Z" fill="#2e2622"/>
<g fill="#6a5a50"><ellipse cx="12.8" cy="16.2" rx="1.4" ry="0.8"/><ellipse cx="19.2" cy="16.2" rx="1.4" ry="0.8"/></g>
<path d="M11 14.2 Q13 13.2 14.6 14 M17.4 14 Q19 13.2 21 14.2" stroke="#5a4436" stroke-width="0.8" fill="none"/>
<path d="M13.5 22.6 Q16 23.4 18.5 22.6" stroke="#9a6a5a" stroke-width="0.9" fill="none"/>
</g></svg>
<svg class="abs" style="left:1055px;top:279px" width="32" height="32" viewBox="0 0 32 32"><defs><clipPath id="ava2"><circle cx="16" cy="16" r="15.8"/></clipPath><radialGradient id="ava2f" cx="0.5" cy="0.5" r="0.6"><stop offset="0" stop-color="#eab898"/><stop offset="1" stop-color="#c98a6c"/></radialGradient></defs>
<g clip-path="url(#ava2)"><rect width="32" height="32" fill="#1e130d"/>
<ellipse cx="16" cy="19" rx="10.5" ry="13" fill="url(#ava2f)"/>
<path d="M4.5 14 Q4 3.5 16 3 Q28 3.5 27.5 14 Q26 9 21 8.5 Q16 8 11 8.8 Q6 9.5 4.5 14Z" fill="#8c7660"/>
<path d="M5 14 Q5.5 18 6.5 20 L6 13Z M27 14 Q26.5 18 25.5 20 L26 13Z" fill="#6e5a48"/>
<g fill="#5a3424"><ellipse cx="11.8" cy="16.3" rx="1.7" ry="0.8"/><ellipse cx="20.2" cy="16.3" rx="1.7" ry="0.8"/></g>
<path d="M15.2 17.5 Q16 20.5 15 21 Q16 21.6 17 21" fill="none" stroke="#b06a50" stroke-width="0.6"/>
<path d="M10 23 Q16 28.5 22 23 Q16 25 10 23Z" fill="#f6f0ea" stroke="#8a4436" stroke-width="0.7"/>
</g></svg>
<div class="txt" style="left:1095.30px;top:235px;font-size:14px;line-height:20px;letter-spacing:-0.220px;color:#222;font-weight:normal;">Andrew Wayne</div>
<div class="txt" style="left:1095.30px;top:284px;font-size:14px;line-height:20px;letter-spacing:-0.213px;color:#222;font-weight:normal;">Travis Barker</div>
</body></html>
